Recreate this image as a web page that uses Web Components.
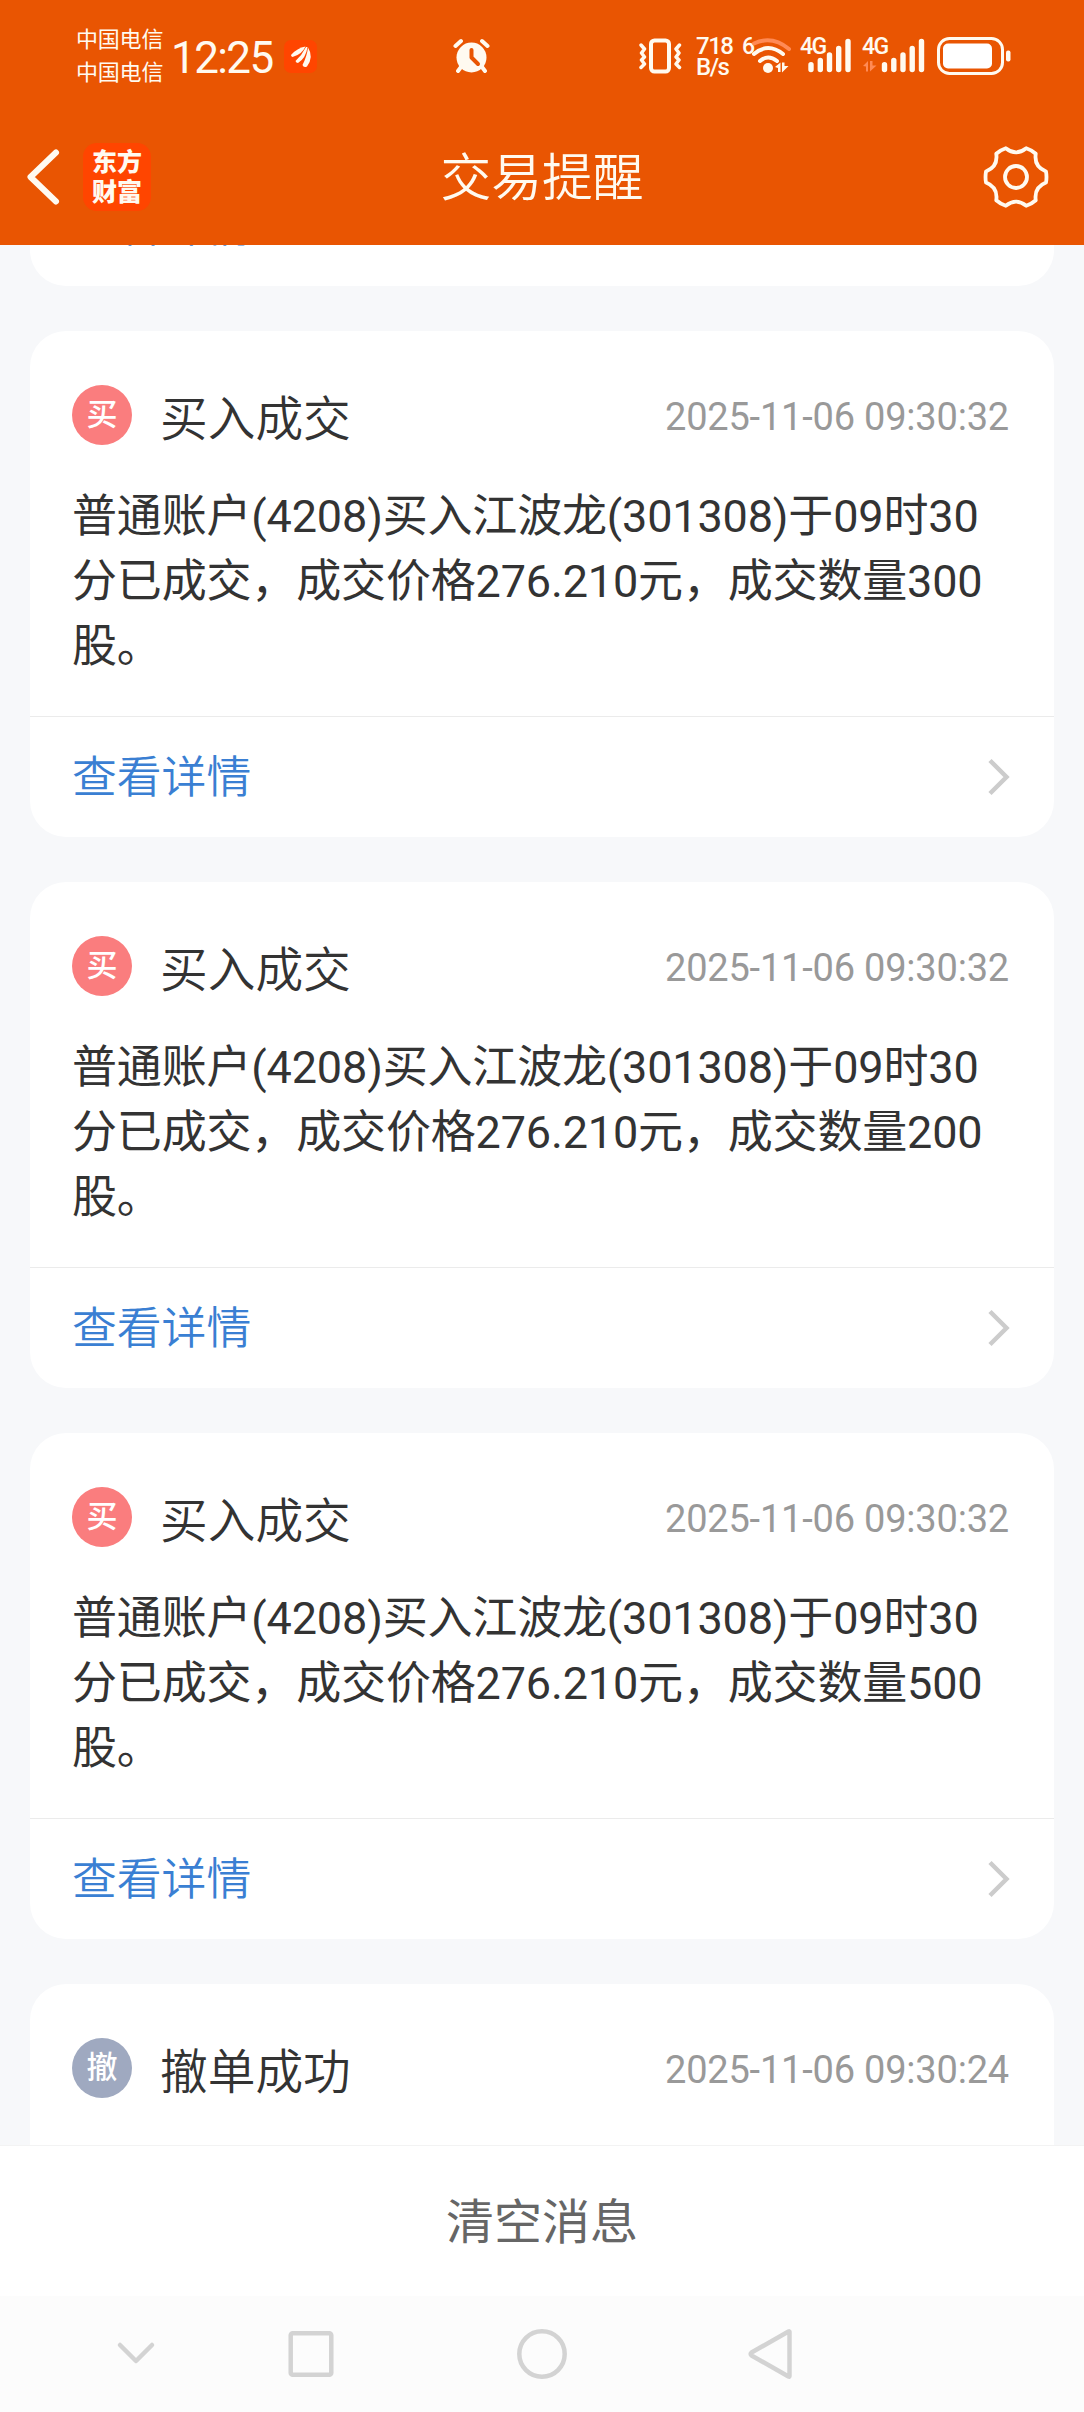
<!DOCTYPE html>
<html lang="zh-CN">
<head>
<meta charset="utf-8">
<title>交易提醒</title>
<style>
  html, body {
    margin: 0;
    padding: 0;
  }

  body {
    width: 1084px;
    height: 2412px;
    overflow: hidden;
    background: #f7f8fa;
    font-family: Roboto, "Noto Sans CJK SC", sans-serif;
    -webkit-font-smoothing: antialiased;
  }
</style>
</head>
<body>
<trade-app></trade-app>

<script>
/**
 * Status bar: carriers, clock and system icons
 */
class StatusBar extends HTMLElement {
  constructor() {
    super();
    this.attachShadow({ mode: 'open' });
  }

  connectedCallback() {
    this.shadowRoot.innerHTML = `
      <style>
        :host {
          display: flex;
          align-items: center;
          height: 112px;
          color: #fffaf0;
          white-space: nowrap;
        }

        svg {
          display: block;
          flex: none;
        }

        .carriers {
          width: 90px;
          margin: -5px 0 0 76px;
          font-size: 22px;
          line-height: 32.5px;
          font-family: "Noto Sans CJK SC", sans-serif;
          letter-spacing: -0.2px;
        }

        .clock {
          width: 112px;
          margin-left: 5px;
          padding-top: 3px;
          font-size: 44px;
          line-height: 50px;
          letter-spacing: -1.6px;
        }

        .app {
          margin-left: 1px;
        }

        .alarm {
          margin-left: 136px;
        }

        .vibrate {
          margin-left: 149px;
        }

        .speed {
          width: 42px;
          margin-left: 14px;
          padding-top: 2px;
          font-size: 24px;
          line-height: 21px;
          font-weight: 500;
          letter-spacing: -1.5px;
        }

        .net {
          font-size: 23px;
          line-height: 24px;
          font-weight: 500;
          letter-spacing: -1.5px;
          align-self: flex-start;
          margin-top: 35px;
        }

        .six {
          width: 10px;
          margin-left: 4px;
        }

        .g1 {
          width: 28px;
          margin-left: 8px;
        }

        .g2 {
          width: 28px;
          margin-left: 10px;
        }

        .bars {
          margin-left: -20px;
        }

        .bars.idle {
          margin-left: -28px;
        }

        .battery {
          margin-left: 11px;
        }
      </style>
      <div class="carriers">中国电信<br>中国电信</div>
      <div class="clock">12:25</div>
      <svg class="app" width="33" height="33" viewBox="0 0 33 33">
        <rect width="33" height="33" rx="7" fill="#ff4500"/>
        <g fill="#fffaf0">
          <path d="M7 15Q13 8 21.500 6.500Q18 14.500 8.500 17Q7 16.500 7 15Z"/>
          <path d="M11.500 21Q18 15 22 7L23.500 7Q22 18 14 23Q12 23 11.500 21Z"/>
          <path d="M18.500 25Q23 16 24 7.500Q30 17 23 26.500Q19.500 28 18.500 25Z"/>
        </g>
      </svg>
      <svg class="alarm" width="37" height="36" viewBox="0 0 37 36" fill="none" stroke-linecap="round">
        <circle cx="18.500" cy="19.500" r="15" fill="#fffaf0"/>
        <path d="M2.500 8L8 3M34.500 8L29 3M8 29L5 33M29 29L32 33" stroke="#fffaf0" stroke-width="4"/>
        <path d="M18.500 12V19.500L25 26" stroke="#e95502" stroke-width="4" stroke-linejoin="round"/>
      </svg>
      <svg class="vibrate" width="43" height="36" viewBox="0 0 43 36" fill="none" stroke="#fffaf0" stroke-linecap="round" stroke-linejoin="round">
        <rect x="12" y="2.500" width="18" height="31" rx="3.500" stroke-width="4"/>
        <path d="M2 7L5.500 11L2.500 15L5.500 19L2.500 22L5.500 26L2 29.500M40.500 7L37 11L40 15L37 19L40 22L37 26L40.500 29.500" stroke-width="3.500"/>
      </svg>
      <div class="speed">718<br>B/s</div>
      <div class="net six">6</div>
      <svg width="40" height="38" viewBox="0 0 40 38" fill="none" stroke="#fffaf0" stroke-width="4">
        <path d="M2 6.500Q20 -2 37 12" stroke="#ff8a55" stroke-linecap="round"/>
        <path d="M2 17Q16 5 31 17M8 24Q16 17 25 24" stroke-linecap="round"/>
        <circle cx="16" cy="31" r="5" fill="#fffaf0" stroke="none"/>
        <path d="M23 30L28.500 25.500V35H26V31ZM30 25.500H32.500V29L36.500 29L30 35.500Z" fill="#fffaf0" stroke="none"/>
      </svg>
      <div class="net g1">4G</div>
      <svg class="bars" width="44" height="38" viewBox="0 0 44 38" stroke="#fffaf0" stroke-width="5.400" stroke-linecap="round">
        <path d="M3 32.500V27.800M12.300 32.500V23.500M21.500 32.500V18M30.700 32.500V11.500M40 32.500V4.500"/>
      </svg>
      <div class="net g2">4G</div>
      <svg class="bars idle" width="64" height="38" viewBox="0 0 64 38" stroke="#fffaf0" stroke-width="5.400" stroke-linecap="round">
        <path d="M1 29L6 24V34.500H4V29.500ZM8 24H10.500V28.500H14.500L8 34.500Z" fill="#ff8a55" stroke="none"/>
        <path d="M22.500 32.500V27.800M31.800 32.500V23.500M41 32.500V18M50.200 32.500V11.500M59.500 32.500V4.500"/>
      </svg>
      <svg class="battery" width="75" height="38" viewBox="0 0 75 38" fill="none">
        <rect x="1.500" y="1.500" width="64" height="35" rx="11" stroke="#fffaf0" stroke-width="3"/>
        <rect x="6" y="6.500" width="49" height="25" rx="5" fill="#fff"/>
        <rect x="69" y="13.500" width="4.500" height="11" rx="2" fill="#fffaf0"/>
      </svg>
    `;
  }
}

/**
 * Page title with back button, app logo and settings
 */
class NavHeader extends HTMLElement {
  constructor() {
    super();
    this.attachShadow({ mode: 'open' });
  }

  connectedCallback() {
    this.shadowRoot.innerHTML = `
      <style>
        :host {
          display: grid;
          grid-template-columns: 1fr auto 1fr;
          align-items: center;
          height: 133px;
          box-sizing: border-box;
          padding: 0 24px 3px;
          color: #fffaf0;
        }

        svg {
          display: block;
        }

        .left {
          display: flex;
          align-items: center;
          gap: 22px;
        }

        .logo {
          width: 68px;
          height: 68px;
          box-sizing: border-box;
          padding-top: 5px;
          border-radius: 14px;
          background: #ff4500;
          font-size: 25px;
          line-height: 29.5px;
          font-weight: 900;
          text-align: center;
        }

        h1 {
          margin: 0;
          padding-top: 4px;
          font-size: 50.8px;
          line-height: 64px;
          font-weight: 350;
        }

        .gear {
          justify-self: end;
          margin-right: 10px;
        }
      </style>
      <div class="left">
        <svg width="37" height="60" viewBox="0 0 37 60" fill="none" stroke="#fffaf0" stroke-width="6" stroke-linecap="round" stroke-linejoin="round">
          <path d="M32 5.500L6.500 30L32 54.500"/>
        </svg>
        <div class="logo">东方<br>财富</div>
      </div>
      <h1><slot></slot></h1>
      <svg class="gear" width="68" height="68" viewBox="-34 -34 68 68" fill="none" stroke="#fffaf0" stroke-width="3.800" stroke-linejoin="round">
        <path d="M30 -5.500Q31 0 30 5.500Q17.800 10.250 19.760 23.230Q15.500 27 10.240 28.730Q0 20.500 -10.240 28.730Q-15.500 27 -19.760 23.230Q-17.800 10.250 -30 5.500Q-31 0 -30 -5.500Q-17.800 -10.250 -19.760 -23.230Q-15.500 -27 -10.240 -28.730Q0 -20.500 10.240 -28.730Q15.500 -27 19.760 -23.230Q17.800 -10.250 30 -5.500Z"/>
        <circle r="11"/>
      </svg>
    `;
  }
}

/**
 * "View details" row at the bottom of a card
 */
class DetailLink extends HTMLElement {
  constructor() {
    super();
    this.attachShadow({ mode: 'open' });
  }

  connectedCallback() {
    this.shadowRoot.innerHTML = `
      <style>
        :host {
          display: flex;
          justify-content: space-between;
          align-items: center;
          height: 121px;
          box-sizing: border-box;
          border-top: 1px solid #ebebeb;
          padding: 0 44px 0 42px;
          color: #3a7fd3;
          font-size: 44.8px;
          line-height: 60px;
          font-weight: 350;
        }

        span {
          padding-top: 2px;
        }
      </style>
      <span><slot></slot></span>
      <svg width="22" height="38" viewBox="0 0 22 38" fill="none" stroke="#ccc" stroke-width="4.500">
        <path d="M2 2.500L18.500 19L2 35.500"/>
      </svg>
    `;
  }
}

/**
 * Message card
 * Attributes: badge, heading, time, type (buy | cancel)
 */
class MessageCard extends HTMLElement {
  constructor() {
    super();
    this.attachShadow({ mode: 'open' });
  }

  connectedCallback() {
    const badge = this.getAttribute('badge');
    const header = badge ? `
      <header>
        <span class="badge">${badge}</span>
        <h2>${this.getAttribute('heading')}</h2>
        <time>${this.getAttribute('time')}</time>
      </header>
      <div class="text"><slot></slot></div>
    ` : '';

    this.shadowRoot.innerHTML = `
      <style>
        :host {
          display: block;
          flex: none;
          border-radius: 36px;
          background: #fff;
          color: #333;
          overflow: hidden;
        }

        header {
          display: flex;
          align-items: center;
          height: 60px;
          padding: 54px 45px 0 42px;
        }

        .badge {
          width: 60px;
          height: 60px;
          border-radius: 50%;
          background: #fa7d7e;
          color: #fff;
          font-size: 31px;
          line-height: 60px;
          font-weight: 500;
          text-align: center;
        }

        :host([type="cancel"]) .badge {
          background: #9fa9c0;
        }

        h2 {
          margin: 0 0 0 28px;
          padding-top: 9px;
          font-size: 47.7px;
          line-height: 60px;
          font-weight: 350;
        }

        time {
          margin-left: auto;
          padding-top: 3px;
          color: #999;
          font-size: 38px;
          line-height: 60px;
          letter-spacing: -0.2px;
        }

        .text {
          padding: 39px 42px 0;
          height: 232px;
          font-size: 45px;
          line-height: 65px;
          letter-spacing: -0.16px;
          white-space: pre-line;
        }

        :host([type="cancel"]) .text {
          display: none;
        }
      </style>
      ${header}
      <slot name="footer"></slot>
    `;
  }
}

/**
 * System navigation bar
 */
class SystemNav extends HTMLElement {
  constructor() {
    super();
    this.attachShadow({ mode: 'open' });
  }

  connectedCallback() {
    this.shadowRoot.innerHTML = `
      <style>
        :host {
          display: grid;
          grid-template-columns: 272px 78px 384px 72px;
          align-items: center;
          height: 116px;
          background: #fcfcfc;
        }

        svg {
          display: block;
          justify-self: center;
        }
      </style>
      <svg width="40" height="52" viewBox="0 0 40 52" fill="none" stroke="#d3d3d3" stroke-width="4.500" stroke-linecap="round" stroke-linejoin="round">
        <path d="M4 17L20 33L36 17"/>
      </svg>
      <svg width="52" height="52" viewBox="0 0 52 52" fill="none" stroke="#d3d3d3" stroke-width="4.500">
        <rect x="5.700" y="5.200" width="40.600" height="41.600" rx="2"/>
      </svg>
      <svg width="52" height="52" viewBox="0 0 52 52" fill="none" stroke="#d3d3d3" stroke-width="4.500">
        <circle cx="26" cy="26" r="22.700"/>
      </svg>
      <svg width="48" height="52" viewBox="0 0 48 52" fill="none" stroke="#d3d3d3" stroke-width="4.500" stroke-linejoin="round">
        <path d="M43.500 3.800Q43.500 3 42.500 3.500L5.500 24.500Q4 26 5.500 27.500L42.500 48.500Q43.500 49 43.500 48Z"/>
      </svg>
    `;
  }
}

class TradeApp extends HTMLElement {
  constructor() {
    super();
    this.attachShadow({ mode: 'open' });

    this.messages = [300, 200, 500].map(count => ({
      badge: '买',
      heading: '买入成交',
      time: '2025-11-06 09:30:32',
      type: 'buy',
      text: `普通账户(4208)买入江波龙(301308)于09时30\n分已成交，成交价格276.210元，成交数量${count}\n股。`
    }));
  }

  connectedCallback() {
    this.render();
  }

  renderCard(message) {
    return `
      <message-card badge="${message.badge}" heading="${message.heading}" time="${message.time}" type="${message.type}">${message.text}<detail-link slot="footer">查看详情</detail-link></message-card>
    `;
  }

  render() {
    this.shadowRoot.innerHTML = `
      <style>
        :host {
          display: flex;
          flex-direction: column;
          height: 2412px;
        }

        .top {
          flex: none;
          background: #e95502;
        }

        .list {
          display: flex;
          flex: 1;
          flex-direction: column;
          gap: 45px;
          min-height: 0;
          padding: 0 30px;
          overflow: hidden;
        }

        /* the list is scrolled, only the end of this card is in view */
        .passed {
          margin-top: -80px;
        }

        .last {
          height: 400px;
        }

        .clear {
          flex: none;
          height: 151px;
          box-sizing: border-box;
          border-top: 1px solid #f3f3f3;
          background: #fff;
          color: #666;
          font-size: 48px;
          line-height: 153px;
          text-align: center;
        }
      </style>
      <div class="top">
        <status-bar></status-bar>
        <nav-header>交易提醒</nav-header>
      </div>
      <div class="list">
        <message-card class="passed"><detail-link slot="footer">查看详情</detail-link></message-card>
        ${this.messages.map(message => this.renderCard(message)).join('')}
        <message-card class="last" badge="撤" heading="撤单成功" time="2025-11-06 09:30:24" type="cancel"></message-card>
      </div>
      <div class="clear">清空消息</div>
      <system-nav></system-nav>
    `;
  }
}

customElements.define('status-bar', StatusBar);
customElements.define('nav-header', NavHeader);
customElements.define('detail-link', DetailLink);
customElements.define('message-card', MessageCard);
customElements.define('system-nav', SystemNav);
customElements.define('trade-app', TradeApp);
</script>
</body>
</html>
